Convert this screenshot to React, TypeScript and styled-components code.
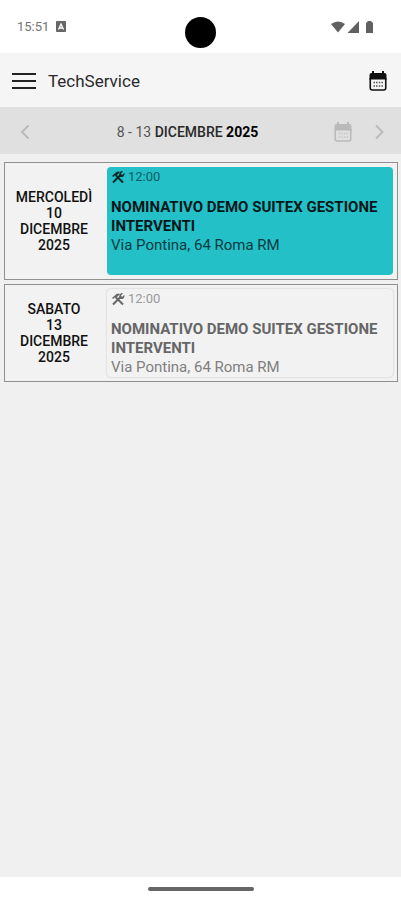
import React from "react";
import styled, { createGlobalStyle, css } from "styled-components";

const GlobalStyle = createGlobalStyle`
  * { box-sizing: border-box; }
  html, body { margin: 0; background: #f0f0f0; }
  body { font-family: Roboto, "Liberation Sans", sans-serif; color: #111; }
  button { font: inherit; color: inherit; background: none; border: 0; padding: 0; margin: 0; cursor: pointer; }
`;

const Screen = styled.div`
  display: flex;
  flex-direction: column;
  min-height: 100vh;
`;

const StatusBar = styled.div`
  display: grid;
  grid-template-columns: 1fr auto 1fr;
  align-items: center;
  height: 53px;
  padding: 0 26px 0 17px;
  background: #fff;
`;

const StatusLeft = styled.div`
  display: flex;
  align-items: center;
  gap: 7px;
  color: #757575;
  font-size: 13px;
  line-height: 16px;
`;

const CameraHole = styled.div`
  width: 31px;
  height: 31px;
  margin: 12px 0 0 9px;
  border-radius: 50%;
  background: #000;
`;

const StatusRight = styled.div`
  display: flex;
  align-items: center;
  justify-content: flex-end;
`;

const AppBar = styled.header`
  display: flex;
  align-items: center;
  gap: 12px;
  height: 54px;
  padding: 2px 13px 0 12px;
  background: #f5f5f5;
`;

const Title = styled.h1`
  flex: 1;
  margin: 0;
  font-size: 17px;
  font-weight: 400;
  line-height: 24px;
  color: #2a2a2a;
`;

const IconButton = styled.button`
  display: flex;
  align-items: center;
  justify-content: center;
`;

const WeekBar = styled.nav`
  display: flex;
  align-items: center;
  height: 47px;
  padding: 2px 13px 0 16px;
  background: #e0e0e0;
  color: #bababa;
`;

const WeekActions = styled.div`
  display: flex;
  align-items: center;
  gap: 17px;
`;

const WeekLabel = styled.div`
  flex: 1;
  padding-left: 8px;
  text-align: center;
  font-size: 14px;
  line-height: 16px;
  font-weight: 500;
  color: #2a2a2a;
`;

const Light = styled.span`
  font-weight: 400;
  color: #555;
`;

const Year = styled.strong`
  font-weight: 700;
  color: #000;
`;

const List = styled.main`
  flex: 1;
  display: flex;
  flex-direction: column;
  gap: 4px;
  padding: 8px 3px 8px 4px;
`;

const DayRow = styled.section`
  display: grid;
  grid-template-columns: 98px 1fr;
  padding: 4px;
  border: 1px solid #8f8f8f;
  background: #f2f2f2;
`;

const DayLabel = styled.h2`
  display: flex;
  flex-direction: column;
  align-items: center;
  justify-content: center;
  margin: 0;
  padding-right: 8px;
  font-size: 14px;
  line-height: 16px;
  font-weight: 500;
  text-align: center;
  color: #111;
`;

const Card = styled.button<{ $active: boolean }>`
  display: flex;
  flex-direction: column;
  align-items: flex-start;
  text-align: left;
  padding: 1px 0 0 4px;
  border-radius: 4px;
  ${({ $active }) =>
    $active
      ? css`
          min-height: 108px;
          background: #24c0c8;
          color: #063c41;
        `
      : css`
          background: #f2f2f2;
          color: #808080;
          box-shadow: 0 0 2px #bbb;
        `}
`;

const Time = styled.span<{ $active: boolean }>`
  display: flex;
  align-items: center;
  gap: 3px;
  margin-bottom: 13px;
  font-size: 13px;
  line-height: 17px;
  color: ${({ $active }) => ($active ? "#0c5c62" : "#999")};
  svg { color: ${({ $active }) => ($active ? "#06282b" : "#666")}; }
`;

const Customer = styled.strong<{ $active: boolean }>`
  font-size: 15px;
  line-height: 19px;
  font-weight: 700;
  color: ${({ $active }) => ($active ? "#04181a" : "#666")};
`;

const Address = styled.span`
  font-size: 15px;
  line-height: 19px;
`;

const GestureBar = styled.footer`
  display: flex;
  justify-content: center;
  height: 23px;
  padding-top: 10px;
  background: #fff;
`;

const Handle = styled.div`
  width: 106px;
  height: 4px;
  border-radius: 2px;
  background: #666;
`;

const CalendarIcon = () => (
  <svg width="20" height="22" viewBox="0 0 20 22" fill="none" aria-hidden="true">
    <path d="M3.500 3h13a2 2 0 0 1 2 2v4.500h-17V5a2 2 0 0 1 2-2z" fill="currentColor" />
    <path d="M5 1v4M15 1v4" stroke="currentColor" strokeWidth="2" />
    <path d="M2.250 8v10q0 2 2 2h11.500q2 0 2-2V8" stroke="currentColor" strokeWidth="1.600" />
    <path d="M5.500 12.500h1.500M8 12.500h1.500M10.800 12.500h1.500M13.500 12.500h1.500M5.500 16h1.500M8 16h1.500M10.800 16h1.500M13.500 16h1.500" stroke="currentColor" strokeWidth="1.600" opacity="0.7" />
  </svg>
);

const Chevron = ({ right = false }: { right?: boolean }) => (
  <svg width="18" height="18" viewBox="0 0 18 18" fill="none" aria-hidden="true">
    <path d={right ? "M6 2.500l6.500 6.500L6 15.500" : "M12.500 2.500L6 9l6.500 6.500"} stroke="currentColor" strokeWidth="1.900" />
  </svg>
);

const ToolsIcon = () => (
  <svg width="14" height="14" viewBox="0 0 14 14" fill="none" stroke="currentColor" aria-hidden="true">
    <path d="M5 5.500l7 7" strokeWidth="2" />
    <path d="M1 6l4.500-4q2-1 3.500 0L6 5 5 6 3.500 5.500 2.500 7z" fill="currentColor" stroke="none" />
    <path d="M2 12.500L9.500 5" strokeWidth="2" />
    <path d="M12 1.200L10 3.400l.4 1.200 1.200.2 1.800-2q.6 2-.8 3.400T9 6.800Q7.600 5 8.600 2.800T12 1.200z" fill="currentColor" stroke="none" />
  </svg>
);

const visits = [
  { day: ["MERCOLEDÌ", "10", "DICEMBRE", "2025"], active: true },
  { day: ["SABATO", "13", "DICEMBRE", "2025"], active: false },
];

export default function App() {
  return (
    <Screen>
      <GlobalStyle />
      <StatusBar>
        <StatusLeft>
          <span>15:51</span>
          <svg width="10" height="11" viewBox="0 0 10 11" aria-hidden="true">
            <rect width="10" height="11" rx="1" fill="#666" />
            <path d="M2.500 8.500L5 3l2.500 5.500M3.500 7h3" fill="none" stroke="#fff" strokeWidth="1.300" />
          </svg>
        </StatusLeft>
        <CameraHole />
        <StatusRight>
          <svg width="44" height="14" viewBox="0 0 44 14" fill="#606060" aria-hidden="true">
            <path d="M0 4Q7-1 14 4L7 12.500z" />
            <path d="M28 1v12H16.500z" />
            <path d="M35 3.500q0-1.500 1.500-1.500V1h4v1q1.500 0 1.500 1.500V13h-7z" />
          </svg>
        </StatusRight>
      </StatusBar>
      <AppBar>
        <IconButton aria-label="Menu">
          <svg width="24" height="18" viewBox="0 0 24 18" aria-hidden="true">
            <path d="M0 2h24M0 9h24M0 16h24" stroke="#222" strokeWidth="2" />
          </svg>
        </IconButton>
        <Title>TechService</Title>
        <IconButton aria-label="Calendario">
          <CalendarIcon />
        </IconButton>
      </AppBar>
      <WeekBar aria-label="Settimana">
        <IconButton aria-label="Settimana precedente">
          <Chevron />
        </IconButton>
        <WeekLabel>
          <Light>8 - 13</Light> DICEMBRE <Year>2025</Year>
        </WeekLabel>
        <WeekActions>
          <IconButton aria-label="Scegli data">
            <CalendarIcon />
          </IconButton>
          <IconButton aria-label="Settimana successiva">
            <Chevron right />
          </IconButton>
        </WeekActions>
      </WeekBar>
      <List>
        {visits.map(({ day, active }) => (
          <DayRow key={day[1]}>
            <DayLabel>
              {day.map((part) => (
                <span key={part}>{part}</span>
              ))}
            </DayLabel>
            <Card $active={active}>
              <Time $active={active}>
                <ToolsIcon />
                12:00
              </Time>
              <Customer $active={active}>NOMINATIVO DEMO SUITEX GESTIONE INTERVENTI</Customer>
              <Address>Via Pontina, 64 Roma RM</Address>
            </Card>
          </DayRow>
        ))}
      </List>
      <GestureBar>
        <Handle />
      </GestureBar>
    </Screen>
  );
}
